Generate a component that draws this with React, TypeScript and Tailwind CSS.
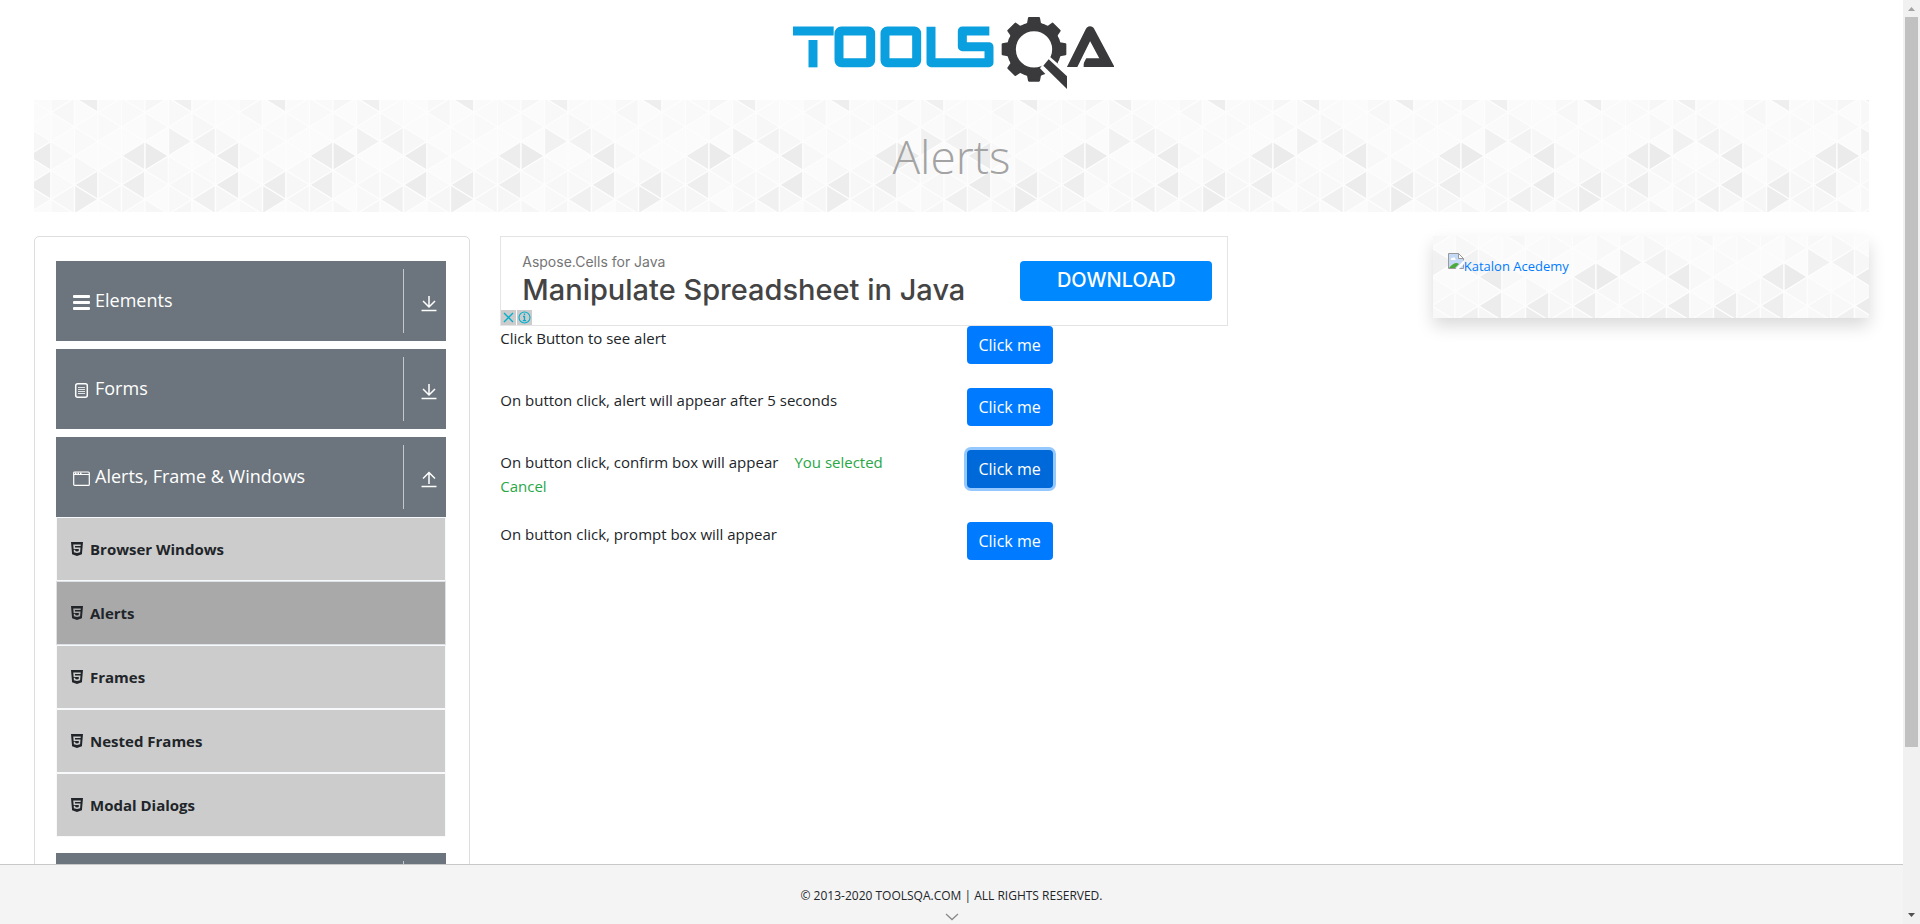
import { useId, useState, type ReactNode } from 'react';
import { FaHtml5 } from 'react-icons/fa';

/* ---------- Triangle backdrop ---------- */

const COL = 23.5;
const SIDE = 29;
const SHADES = ['#fafafa', '#f8f8f8', '#fbfbfb', '#f7f7f7', '#f9f9f9', '#fbfbfb', '#f6f6f6'];
const TINTS = '3021546120453162045213604251306421503426105243160352416025314062';

/* Keys are column:half-row:direction (l points left, r points right). */
const DARK: Record<string, string> = {
  '7:3:l': '#ececec',
  '7:5:l': '#ececec',
  '1:-1:l': '#eeeeee',
  '3:3:l': '#ededed',
  '4:3:r': '#ebebeb',
  '3:5:l': '#eeeeee',
  '1:5:l': '#ededed',
  '1:6:r': '#ededed',
  '5:2:r': '#f1f1f1',
  '6:2:l': '#f2f2f2',
  '5:-1:l': '#f0f0f0',
  '6:6:l': '#f0f0f0',
};

function triangles() {
  const shapes: ReactNode[] = [];
  for (let c = -1; c < 9; c++) {
    for (let h = -2; h < 8; h++) {
      const col = (c + 8) % 8;
      const left = 17 + c * COL;
      const right = left + COL;
      const y = 12.5 + h * (SIDE / 2);
      const dir = (h + c) % 2 === 0 ? 'l' : 'r';
      const edge = dir === 'l' ? right : left;
      const tip = dir === 'l' ? left : right;
      const key = `${col}:${h}:${dir}`;
      const tint = Number(TINTS[(col * 8 + ((h + 8) % 8)) % 64]);
      shapes.push(
        <polygon
          key={`${c}:${h}`}
          points={`${tip},${y} ${edge},${y - SIDE / 2} ${edge},${y + SIDE / 2}`}
          fill={DARK[key] ?? SHADES[tint]}
          stroke="#fdfdfd"
          strokeWidth="1.4"
        />,
      );
    }
  }
  return shapes;
}

function TriangleBackdrop({ shift }: { shift?: string }) {
  const id = useId();
  return (
    <svg className="absolute inset-0 h-full w-full" aria-hidden="true">
      <defs>
        <pattern id={id} width="188" height="116" patternUnits="userSpaceOnUse" patternTransform={shift}>
          {triangles()}
        </pattern>
      </defs>
      <rect width="100%" height="100%" fill={`url(#${id})`} />
    </svg>
  );
}

/* ---------- Logo ---------- */

function Logo() {
  return (
    <svg className="h-[100px] w-[325px]" viewBox="27 0 975 300" role="img" aria-label="TOOLSQA">
      <defs>
        <clipPath id="logo-base">
          <rect x="850" y="60" width="160" height="141" />
        </clipPath>
      </defs>
      <g fill="none" stroke="#0a9fdf" strokeWidth="27" strokeLinejoin="round">
        <line x1="39" y1="93" x2="161" y2="93" />
        <line x1="99" y1="120" x2="99" y2="202" />
        <rect x="177" y="93" width="95" height="95" rx="7" />
        <rect x="315" y="93" width="95" height="95" rx="7" />
        <polyline points="628,93 547,93 547,140 627,140 627,188 453,188 453,80" />
      </g>
      <g fill="#3a3a3c" stroke="#3a3a3c" strokeLinejoin="round">
        <circle cx="762" cy="148" r="68" fill="none" strokeWidth="27" />
        {[0, 45, 90, 135, 180, 225, 270, 315].map((angle) => (
          <polygon
            key={angle}
            points="747,54 777,54 780,70 790,80 734,80 744,70"
            strokeWidth="6"
            transform={`rotate(${angle} 762 148)`}
          />
        ))}
      </g>
      <polygon points="806,167 848,203 880,240 860,290 780,205" fill="#fff" />
      <polygon points="806,178 861,229 861,267 790,197" fill="#3a3a3c" />
      <g clipPath="url(#logo-base)" fill="none" stroke="#3a3a3c" strokeWidth="28">
        <polyline points="867,220 930,93 993,211" strokeLinejoin="round" />
        <line x1="911" y1="188" x2="980" y2="188" strokeWidth="26" />
      </g>
      <polygon points="893,202 913,172 920,172 905,202" fill="#fff" />
    </svg>
  );
}

/* ---------- Sidebar ---------- */

function BarsIcon() {
  return (
    <svg width="18" height="18" viewBox="0 0 18 18" fill="currentColor" aria-hidden="true">
      <rect x="0" y="1" width="17" height="3" rx="1" />
      <rect x="0" y="7" width="17" height="3" rx="1" />
      <rect x="0" y="13" width="17" height="3" rx="1" />
    </svg>
  );
}

function FormIcon() {
  return (
    <svg width="18" height="18" viewBox="0 0 18 18" fill="none" stroke="currentColor" aria-hidden="true">
      <rect x="2.700" y="1.700" width="11.600" height="13.600" rx="2" strokeWidth="1.5" />
      <path d="M5 5.500h7M5 7.500h7M5 9.500h7M5 11.500h7" strokeWidth="0.8" />
    </svg>
  );
}

function WindowIcon() {
  return (
    <svg width="18" height="18" viewBox="0 0 18 18" fill="none" stroke="currentColor" aria-hidden="true">
      <rect x="0.7" y="2" width="15.600" height="13.400" rx="1" strokeWidth="1.2" />
      <path d="M1 4.500h15.500" strokeWidth="1" />
      <path d="M2 3.200h1.500M4.500 3.200H6M7 3.200h1.500" strokeWidth="1.4" />
    </svg>
  );
}

function ArrowIcon({ up }: { up?: boolean }) {
  return (
    <svg width="16" height="18" viewBox="0 0 16 18" fill="none" stroke="currentColor" strokeWidth="1.5" aria-hidden="true">
      <path d={up ? 'M8 14V3M2 8.500 8 2.500l6 6' : 'M8 2v11M2 7l6 6 6-6'} />
      <path d="M0.500 16.500h15" />
    </svg>
  );
}

function GroupHeader({ icon, label, open }: { icon?: ReactNode; label?: string; open?: boolean }) {
  return (
    <button
      type="button"
      aria-label={label ?? 'More'}
      aria-expanded={!!open}
      className="flex h-20 w-full items-center bg-[#6c757d] py-2 text-left text-lg text-white"
    >
      <span className="flex flex-1 items-center gap-1 pl-[17px]">
        <span className="pt-1">{icon}</span>
        <span className="pb-0.5">{label}</span>
      </span>
      <span className="flex h-full w-[43px] items-center justify-center border-l border-[#c4c8cb] pt-1 pl-2">
        <ArrowIcon up={open} />
      </span>
    </button>
  );
}

const PAGES = ['Browser Windows', 'Alerts', 'Frames', 'Nested Frames', 'Modal Dialogs'];

function Sidebar() {
  return (
    <nav className="rounded-[5px] border border-[#dddddd] py-6 pr-[23px] pl-[21px]">
      <div className="flex flex-col gap-2">
        <GroupHeader icon={<BarsIcon />} label="Elements" />
        <GroupHeader icon={<FormIcon />} label="Forms" />
        <div>
          <GroupHeader icon={<WindowIcon />} label="Alerts, Frame & Windows" open />
          <ul className="mb-2">
            {PAGES.map((page) => (
              <li key={page}>
                <a
                  href="#"
                  className={
                    page === 'Alerts'
                      ? 'flex h-16 items-center gap-[7px] border border-[#dee2e6] bg-[#a9a9a9] px-[14px] text-[15px] font-bold text-[#212529]'
                      : 'flex h-16 items-center gap-[7px] border border-[#f8f9fa] bg-[#cccccc] px-[14px] text-[15px] font-bold text-[#212529]'
                  }
                >
                  <FaHtml5 className="h-4 w-3" aria-hidden="true" />
                  {page}
                </a>
              </li>
            ))}
          </ul>
        </div>
        <GroupHeader />
      </div>
    </nav>
  );
}

/* ---------- Main column ---------- */

function Advert() {
  return (
    <section
      aria-label="Advertisement"
      className="relative flex h-[90px] w-[728px] items-center justify-between border border-[#e4e4e4] pr-[15px] pl-[21px]"
    >
      <div>
        <p className="font-['Inter',sans-serif] text-sm leading-[18px] text-[#757575]">Aspose.Cells for Java</p>
        <p className="font-['Inter',sans-serif] text-[29px] leading-[38px] font-medium text-[#444444]">
          Manipulate Spreadsheet in Java
        </p>
      </div>
      <a
        href="#"
        className="flex h-10 w-48 items-center justify-center rounded bg-[#0088ff] pb-0.5 font-['Inter',sans-serif] text-xl font-medium text-white"
      >
        DOWNLOAD
      </a>
      <div className="absolute bottom-0 left-0 flex gap-px text-[#00aecd]">
        <button type="button" aria-label="Close" className="h-[15px] w-[15px] bg-[#cccccc]">
          <svg width="15" height="15" viewBox="0 0 15 15" fill="none" stroke="currentColor" strokeWidth="1.3">
            <path d="M3 3l9 9M12 3l-9 9" />
          </svg>
        </button>
        <button type="button" aria-label="Ad information" className="h-[15px] w-[15px] bg-[#cccccc]">
          <svg width="15" height="15" viewBox="0 0 15 15" fill="none" stroke="currentColor" strokeWidth="1.1">
            <circle cx="7.500" cy="7.500" r="5.500" />
            <path d="M7.500 3.500v1.500M6 6.500h1.500v4M5.800 10.700h3.400" strokeWidth="1.3" />
          </svg>
        </button>
      </div>
    </section>
  );
}

function AlertRow({ text, result, active, onClick }: { text: string; result?: string; active?: boolean; onClick: () => void }) {
  return (
    <div className="mb-6 grid grid-cols-2 items-start gap-[30px]">
      <p className="pr-4 leading-6">
        {text}
        {result && <span className="ml-4 text-[#28a745]">{result}</span>}
      </p>
      <div className="flex">
        <button
          type="button"
          onClick={onClick}
          className={
            active
              ? 'h-[38px] rounded bg-[#0069d9] px-3 text-base text-white ring-3 ring-[#94c8fe]'
              : 'h-[38px] rounded bg-[#007bff] px-3 text-base text-white'
          }
        >
          Click me
        </button>
      </div>
    </div>
  );
}

const ALERTS = [
  'Click Button to see alert',
  'On button click, alert will appear after 5 seconds',
  'On button click, confirm box will appear',
  'On button click, prompt box will appear',
];

function BrokenImageIcon() {
  return (
    <svg width="16" height="16" viewBox="0 0 16 16" aria-hidden="true">
      <path d="M0.500 0.500h10l5 5v10h-15z" fill="#c3d9f5" stroke="#9a9a9a" />
      <path d="M10.500 0.500v5h5z" fill="#fff" stroke="#9a9a9a" />
      <path d="M3 6c0-1 1-1.500 1.800-1C5.500 3.800 7 4.500 7 5.500 8 5.500 8 7 7 7H3.500C2.500 7 2.500 6 3 6z" fill="#fff" />
      <path d="M1 15c2-3 5-5 8-5l2 1-4 4z" fill="#4ea93b" />
      <path d="M16 7 7.500 16h3.500l5-5z" fill="#fff" />
    </svg>
  );
}

/* ---------- Page ---------- */

export default function App() {
  const [active, setActive] = useState(2);

  return (
    <div className="flex h-screen overflow-hidden bg-white font-['Open_Sans','Noto_Sans',sans-serif] text-[15px] text-[#212529]">
      <div className="flex min-w-0 flex-1 flex-col">
        <div className="min-h-0 flex-1 overflow-hidden px-[34px]">
          <header className="flex justify-center">
            <a href="#">
              <Logo />
            </a>
          </header>

          <div className="relative mb-6 flex h-28 items-center justify-center overflow-hidden">
            <TriangleBackdrop />
            <h1 className="relative text-[46px] font-light text-[#a3a3a3]">Alerts</h1>
          </div>

          <div className="grid grid-cols-4 items-start gap-[30px]">
            <Sidebar />
            <main className="col-span-2">
              <Advert />
              {ALERTS.map((text, i) => (
                <AlertRow
                  key={text}
                  text={text}
                  result={i === 2 ? 'You selected Cancel' : undefined}
                  active={i === active}
                  onClick={() => setActive(i)}
                />
              ))}
            </main>
            <aside className="relative h-[82px] p-[15px] shadow-[0_8px_16px_rgba(0,0,0,0.15)]">
              <TriangleBackdrop shift="translate(52 -15)" />
              <a href="#" className="relative flex items-start text-[13px] leading-[30px] text-[#007bff]">
                <span className="pt-[2px]">
                  <BrokenImageIcon />
                </span>
                Katalon Acedemy
              </a>
            </aside>
          </div>
        </div>

        <footer className="flex h-[60px] shrink-0 flex-col items-center border-t border-[#c8c8c8] bg-[#f4f4f4] pt-[22px]">
          <p className="text-xs leading-[18px]">© 2013-2020 TOOLSQA.COM | ALL RIGHTS RESERVED.</p>
          <svg className="mt-2" width="14" height="8" viewBox="0 0 14 8" fill="none" stroke="#8a8a8a" strokeWidth="1.3" aria-hidden="true">
            <path d="M1 1l6 5.500L13 1" />
          </svg>
        </footer>
      </div>

      <div className="flex w-[17px] shrink-0 flex-col bg-[#f1f1f1]" aria-hidden="true">
        <svg width="17" height="17" viewBox="0 0 17 17">
          <path d="M5 11h7L8.500 7z" fill="#a3a3a3" />
        </svg>
        <div className="mx-[2px] h-[79%] bg-[#c1c1c1]" />
        <svg className="mt-auto" width="17" height="17" viewBox="0 0 17 17">
          <path d="M5 6h7L8.500 10z" fill="#505050" />
        </svg>
      </div>
    </div>
  );
}
